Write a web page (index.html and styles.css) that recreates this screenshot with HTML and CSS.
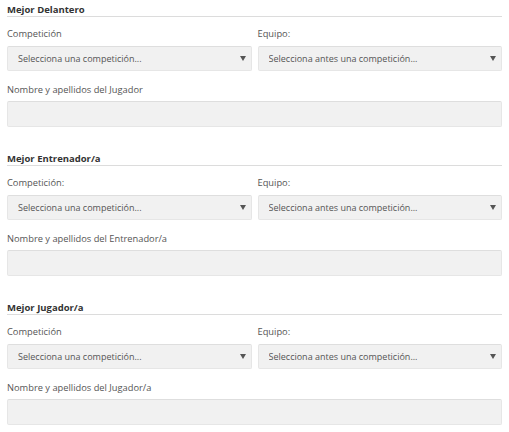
FILE: index.html
```html
<!DOCTYPE html>
<html lang="es">

<head>
    <meta charset="UTF-8">
    <meta name="viewport" content="width=device-width, initial-scale=1.0">
    <title>Votaciones - Premios</title>
    <link rel="stylesheet" href="styles.css">
</head>

<body>
    <form class="votes">
        <!-- Mejor Delantero -->
        <section class="award">
            <h3>Mejor Delantero</h3>
            <div class="row">
                <div class="field">
                    <label for="compDelantero">Competición</label>
                    <div class="select-wrap">
                        <select id="compDelantero">
                            <option>Selecciona una competición...</option>
                        </select>
                    </div>
                </div>
                <div class="field">
                    <label for="equipoDelantero">Equipo:</label>
                    <div class="select-wrap">
                        <select id="equipoDelantero">
                            <option>Selecciona antes una competición...</option>
                        </select>
                    </div>
                </div>
            </div>
            <label for="nombreDelantero" class="name-label">Nombre y apellidos del Jugador</label>
            <input type="text" id="nombreDelantero">
        </section>

        <!-- Mejor Entrenador/a -->
        <section class="award">
            <h3>Mejor Entrenador/a</h3>
            <div class="row">
                <div class="field">
                    <label for="compEntrenador">Competición:</label>
                    <div class="select-wrap">
                        <select id="compEntrenador">
                            <option>Selecciona una competición...</option>
                        </select>
                    </div>
                </div>
                <div class="field">
                    <label for="equipoEntrenador">Equipo:</label>
                    <div class="select-wrap">
                        <select id="equipoEntrenador">
                            <option>Selecciona antes una competición...</option>
                        </select>
                    </div>
                </div>
            </div>
            <label for="nombreEntrenador" class="name-label">Nombre y apellidos del Entrenador/a</label>
            <input type="text" id="nombreEntrenador">
        </section>

        <!-- Mejor Jugador/a -->
        <section class="award">
            <h3>Mejor Jugador/a</h3>
            <div class="row">
                <div class="field">
                    <label for="compJugador">Competición</label>
                    <div class="select-wrap">
                        <select id="compJugador">
                            <option>Selecciona una competición...</option>
                        </select>
                    </div>
                </div>
                <div class="field">
                    <label for="equipoJugador">Equipo:</label>
                    <div class="select-wrap">
                        <select id="equipoJugador">
                            <option>Selecciona antes una competición...</option>
                        </select>
                    </div>
                </div>
            </div>
            <label for="nombreJugador" class="name-label">Nombre y apellidos del Jugador/a</label>
            <input type="text" id="nombreJugador">
        </section>
    </form>
</body>

</html>
```

FILE: styles.css
```css
body {
    font-family: "Open Sans", Arial, sans-serif;
    background-color: #ffffff;
    margin: 0;
    padding: 0;
    color: #555;
}

.votes {
    padding: 4px 7px 0 7px;
}

/* Each award block */
.award {
    margin-bottom: 26px;
}

.award h3 {
    margin: 0;
    font-size: 9.5px;
    line-height: 12px;
    font-weight: bold;
    color: #333;
    border-bottom: 1px solid #dcdcdc;
}

.row {
    display: grid;
    grid-template-columns: 1fr 1fr;
    column-gap: 6px;
    margin-top: 11px;
}

label {
    display: block;
    font-size: 9.3px;
    line-height: 12px;
    color: #555;
}

.name-label {
    margin-top: 13px;
}

/* Select with a small arrow */
.select-wrap {
    position: relative;
    margin-top: 6px;
}

.select-wrap::after {
    content: "";
    position: absolute;
    right: 6px;
    top: 10px;
    border-left: 3px solid transparent;
    border-right: 3px solid transparent;
    border-top: 5px solid #555;
    pointer-events: none;
}

select,
input[type="text"] {
    display: block;
    width: 100%;
    box-sizing: border-box;
    font-family: "Open Sans", Arial, sans-serif;
    font-size: 9px;
    color: #555;
    background-color: #f1f1f1;
    border: 1px solid #e6e6e6;
    border-top-color: #dedede;
    border-radius: 2px;
    outline: none;
}

select {
    height: 25px;
    padding: 0 20px 0 10px;
    appearance: none;
    -webkit-appearance: none;
}

input[type="text"] {
    height: 26px;
    margin-top: 5px;
    padding: 0 10px;
}
```
